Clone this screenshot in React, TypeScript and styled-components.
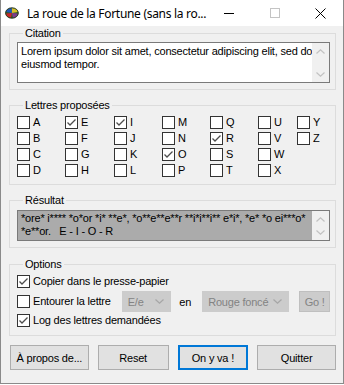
import React from "react";
import styled, { createGlobalStyle } from "styled-components";

const UI_FONT = `"Liberation Sans", Arial, sans-serif`;

const GlobalStyle = createGlobalStyle`
  html, body {
    margin: 0;
    padding: 0;
    background: #ffffff;
  }
  * {
    box-sizing: border-box;
  }
`;

const Window = styled.div`
  width: 344px;
  height: 384px;
  display: flex;
  flex-direction: column;
  background: #f0f0f0;
  border: 1px solid #8a8a8a;
  border-top: 0;
  font-family: ${UI_FONT};
  font-size: 11px;
  letter-spacing: -0.2px;
  color: #000;
  overflow: hidden;
`;

const TitleBar = styled.div`
  height: 26px;
  display: flex;
  align-items: center;
  background: #ffffff;
  flex-shrink: 0;
`;

const AppIcon = styled.svg`
  margin-left: 4px;
  width: 14px;
  height: 12px;
`;

const Title = styled.div`
  flex: 1;
  margin-left: 8px;
  font-family: "Noto Sans", "Open Sans", sans-serif;
  font-size: 12px;
  letter-spacing: -0.3px;
  color: #000;
  white-space: nowrap;
`;

const CaptionButton = styled.div`
  width: 46px;
  height: 26px;
  display: flex;
  align-items: center;
  justify-content: center;
`;

const Body = styled.div`
  flex: 1;
  display: flex;
  flex-direction: column;
  padding: 1px 7px 0 8px;
`;

const Group = styled.fieldset<{ $gap?: number }>`
  margin: ${(p) => p.$gap ?? 0}px 0 0 0;
  padding: 2px 5px 6px 7px;
  border: 1px solid #dcdcdc;
  min-width: 0;
`;

const Legend = styled.legend`
  margin-left: 6px;
  padding: 0 2px;
  font-size: 11px;
  line-height: 13px;
  color: #000;
`;

const TextBox = styled.div<{ $height: number; $shaded?: boolean }>`
  height: ${(p) => p.$height}px;
  display: flex;
  border: 1px solid #7a7a7a;
  background: ${(p) => (p.$shaded ? "#ababab" : "#ffffff")};
`;

const TextArea = styled.div<{ $top: number }>`
  flex: 1;
  padding: ${(p) => p.$top}px 2px 0 3px;
  line-height: 13px;
  white-space: pre;
  overflow: hidden;
`;

const ScrollBar = styled.div`
  width: 17px;
  display: flex;
  flex-direction: column;
  justify-content: space-between;
  align-items: center;
  background: #f0f0f0;
  padding: 6px 0 5px;
`;

const LetterGrid = styled.div`
  margin-top: 2px;
  display: grid;
  grid-template-columns: 48px 49px 48px 48px 48px 39px auto;
  grid-template-rows: repeat(4, 13px);
  grid-auto-flow: column;
  row-gap: 3px;
  margin-bottom: 1px;
`;

const CheckLabel = styled.label`
  display: flex;
  align-items: center;
  gap: 3px;
  height: 13px;
  line-height: 13px;
  white-space: nowrap;
`;

const Box = styled.span`
  width: 13px;
  height: 13px;
  flex-shrink: 0;
  display: flex;
  align-items: center;
  justify-content: center;
  border: 1px solid #333333;
  background: #ffffff;
`;

const OptionList = styled.div`
  margin-top: 2px;
  display: flex;
  flex-direction: column;
  gap: 7px;
  margin-bottom: 2px;
`;

const OptionRow = styled.div`
  display: flex;
  align-items: center;
  height: 21px;
  margin: -4px 0 -5px;
`;

const Combo = styled.div<{ $width: number }>`
  width: ${(p) => p.$width}px;
  height: 21px;
  display: flex;
  align-items: center;
  justify-content: space-between;
  padding: 0 6px 0 5px;
  background: #cccccc;
  border: 1px solid #cccccc;
  color: #838383;
  white-space: nowrap;
`;

const InlineText = styled.span`
  margin: 0 11px 0 8px;
`;

const SmallButton = styled.div`
  margin-left: 10px;
  width: 31px;
  height: 21px;
  display: flex;
  align-items: center;
  justify-content: center;
  background: #cccccc;
  border: 1px solid #bfbfbf;
  color: #838383;
`;

const ButtonRow = styled.div`
  margin-top: 9px;
  padding-left: 1px;
  display: flex;
  gap: 9px;
`;

const Button = styled.div<{ $width: number; $default?: boolean }>`
  width: ${(p) => p.$width}px;
  height: 25px;
  display: flex;
  align-items: center;
  justify-content: center;
  background: #e1e1e1;
  border: ${(p) => (p.$default ? "2px solid #0078d7" : "1px solid #adadad")};
  color: #000;
`;

const Check = ({ checked }: { checked?: boolean }) => (
  <Box>
    {checked && (
      <svg width="11" height="11" viewBox="0 0 11 11">
        <path d="M1.5 5.5 L4 8 L9.5 2.5" fill="none" stroke="#4d4d4d" strokeWidth="1.3" />
      </svg>
    )}
  </Box>
);

const Chevron = ({ up, color = "#c2c2c2" }: { up?: boolean; color?: string }) => (
  <svg width="9" height="5" viewBox="0 0 9 5">
    <path
      d={up ? "M0.5 4.5 L4.5 0.8 L8.5 4.5" : "M0.5 0.5 L4.5 4.2 L8.5 0.5"}
      fill="none"
      stroke={color}
      strokeWidth="1.2"
    />
  </svg>
);

const Scroll = () => (
  <ScrollBar>
    <Chevron up />
    <Chevron />
  </ScrollBar>
);

const columns = [
  ["A", "B", "C", "D"],
  ["E", "F", "G", "H"],
  ["I", "J", "K", "L"],
  ["M", "N", "O", "P"],
  ["Q", "R", "S", "T"],
  ["U", "V", "W", "X"],
  ["Y", "Z"],
];

const picked = ["E", "I", "O", "R"];

const App: React.FC = () => (
  <>
    <GlobalStyle />
    <Window>
      <TitleBar>
        <AppIcon viewBox="0 0 14 12">
          <ellipse cx="7" cy="6" rx="6.5" ry="5.3" fill="#2b5d1f" />
          <path d="M7 1 L7 6 L1 5 Q2 1.5 7 1Z" fill="#1f58b8" />
          <path d="M7 1 Q12 1.5 13 5 L7 6Z" fill="#d9bf2a" />
          <path d="M1 6.5 L7 6 L6 11 Q1.5 10 1 6.5Z" fill="#c8282a" />
          <path d="M7 6 L13 6.5 Q12.5 10 8 11Z" fill="#7e3c8f" />
          <ellipse cx="7" cy="6" rx="6.5" ry="5.3" fill="none" stroke="#1d2a14" strokeWidth="0.8" />
        </AppIcon>
        <Title>La roue de la Fortune (sans la ro...</Title>
        <CaptionButton>
          <svg width="10" height="10" viewBox="0 0 10 10">
            <path d="M0 5.5 H10" stroke="#000" strokeWidth="1" />
          </svg>
        </CaptionButton>
        <CaptionButton>
          <svg width="10" height="10" viewBox="0 0 10 10">
            <rect x="0.5" y="0.5" width="9" height="9" fill="none" stroke="#c4c4c4" />
          </svg>
        </CaptionButton>
        <CaptionButton>
          <svg width="11" height="11" viewBox="0 0 11 11">
            <path d="M0.5 0.5 L10.5 10.5 M10.5 0.5 L0.5 10.5" stroke="#000" strokeWidth="1" />
          </svg>
        </CaptionButton>
      </TitleBar>
      <Body>
        <Group>
          <Legend>Citation</Legend>
          <TextBox $height={41}>
            <TextArea $top={2}>
              {"Lorem ipsum dolor sit amet, consectetur adipiscing elit, sed do\neiusmod tempor."}
            </TextArea>
            <Scroll />
          </TextBox>
        </Group>

        <Group $gap={9}>
          <Legend>Lettres proposées</Legend>
          <LetterGrid>
            {columns.flat().map((letter) => (
              <CheckLabel key={letter}>
                <Check checked={picked.includes(letter)} />
                {letter}
              </CheckLabel>
            ))}
          </LetterGrid>
        </Group>

        <Group $gap={9}>
          <Legend>Résultat</Legend>
          <TextBox $height={31} $shaded style={{ marginTop: 1 }}>
            <TextArea $top={1}>
              {"*ore* i**** *o*or *i* **e*, *o**e**e**r **i*i**i** e*i*, *e* *o ei***o*\n*e**or.   E - I - O - R"}
            </TextArea>
            <Scroll />
          </TextBox>
        </Group>

        <Group $gap={10}>
          <Legend>Options</Legend>
          <OptionList>
            <CheckLabel>
              <Check checked />
              Copier dans le presse-papier
            </CheckLabel>
            <OptionRow>
              <CheckLabel>
                <Check />
                Entourer la lettre
              </CheckLabel>
              <Combo $width={50} style={{ marginLeft: 11 }}>
                E/e
                <Chevron color="#a6a6a6" />
              </Combo>
              <InlineText>en</InlineText>
              <Combo $width={88}>
                Rouge foncé
                <Chevron color="#a6a6a6" />
              </Combo>
              <SmallButton>Go !</SmallButton>
            </OptionRow>
            <CheckLabel>
              <Check checked />
              Log des lettres demandées
            </CheckLabel>
          </OptionList>
        </Group>

        <ButtonRow>
          <Button $width={79}>À propos de...</Button>
          <Button $width={71}>Reset</Button>
          <Button $width={71} $default>
            On y va !
          </Button>
          <Button $width={79}>Quitter</Button>
        </ButtonRow>
      </Body>
    </Window>
  </>
);

export default App;
